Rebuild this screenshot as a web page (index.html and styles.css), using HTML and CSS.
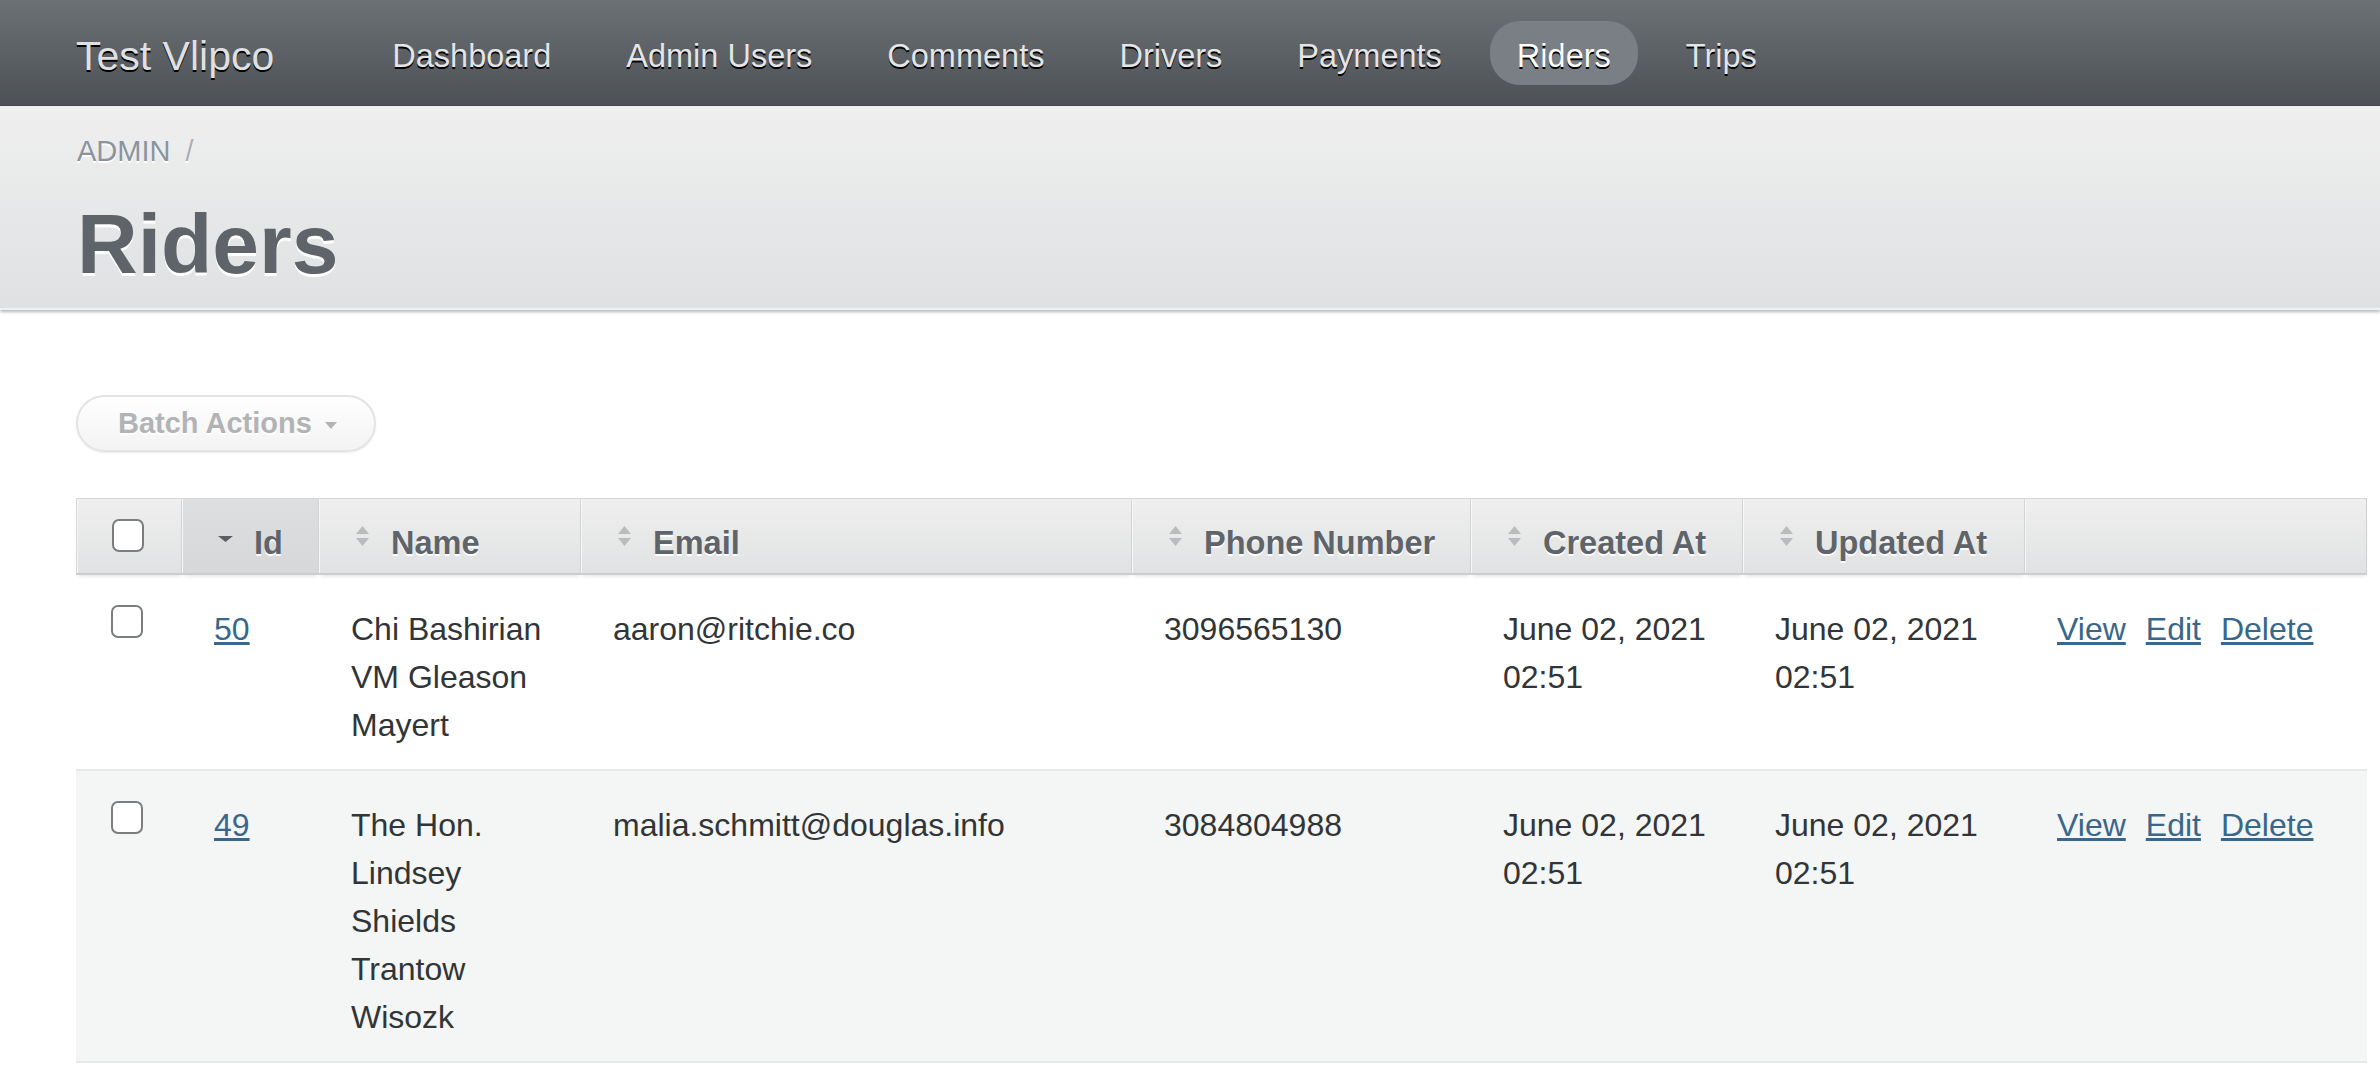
FILE: index.html
```html
<!DOCTYPE html>
<html lang="en">
<head>
<meta charset="utf-8">
<title>Riders | Test Vlipco</title>
<link rel="stylesheet" href="styles.css">
</head>
<body>
<div class="header">
  <h1 class="site-title">Test Vlipco</h1>
  <ul class="nav">
    <li class="nav-item"><a class="nav-link" href="#">Dashboard</a></li>
    <li class="nav-item"><a class="nav-link" href="#">Admin Users</a></li>
    <li class="nav-item"><a class="nav-link" href="#">Comments</a></li>
    <li class="nav-item"><a class="nav-link" href="#">Drivers</a></li>
    <li class="nav-item"><a class="nav-link" href="#">Payments</a></li>
    <li class="nav-item"><a class="nav-link current" href="#">Riders</a></li>
    <li class="nav-item"><a class="nav-link" href="#">Trips</a></li>
  </ul>
</div>

<div class="title-bar">
  <div class="breadcrumbs"><a class="crumb" href="#">ADMIN</a><span class="crumb-sep">/</span></div>
  <h2 class="page-title">Riders</h2>
</div>

<div class="main">
  <div class="table-tools">
    <a class="batch-btn" href="#">Batch Actions<span class="caret"></span></a>
  </div>

  <table class="index-table">
    <colgroup>
      <col class="c-check">
      <col class="c-id">
      <col class="c-name">
      <col class="c-email">
      <col class="c-phone">
      <col class="c-created">
      <col class="c-updated">
      <col class="c-actions">
    </colgroup>
    <thead>
      <tr>
        <th class="th-check"><input class="cb" type="checkbox"></th>
        <th class="sortable sorted"><svg class="sort-icon" width="17" height="22" viewBox="0 0 17 22"><polygon points="1,11 16,11 8.5,17" fill="#5b5f63"/></svg>Id</th>
        <th class="sortable"><svg class="sort-icon" width="17" height="22" viewBox="0 0 17 22"><polygon points="2,9 15,9 8.5,1" fill="#b9bbbd"/><polygon points="2,13 15,13 8.5,21" fill="#b9bbbd"/></svg>Name</th>
        <th class="sortable"><svg class="sort-icon" width="17" height="22" viewBox="0 0 17 22"><polygon points="2,9 15,9 8.5,1" fill="#b9bbbd"/><polygon points="2,13 15,13 8.5,21" fill="#b9bbbd"/></svg>Email</th>
        <th class="sortable"><svg class="sort-icon" width="17" height="22" viewBox="0 0 17 22"><polygon points="2,9 15,9 8.5,1" fill="#b9bbbd"/><polygon points="2,13 15,13 8.5,21" fill="#b9bbbd"/></svg>Phone Number</th>
        <th class="sortable"><svg class="sort-icon" width="17" height="22" viewBox="0 0 17 22"><polygon points="2,9 15,9 8.5,1" fill="#b9bbbd"/><polygon points="2,13 15,13 8.5,21" fill="#b9bbbd"/></svg>Created At</th>
        <th class="sortable"><svg class="sort-icon" width="17" height="22" viewBox="0 0 17 22"><polygon points="2,9 15,9 8.5,1" fill="#b9bbbd"/><polygon points="2,13 15,13 8.5,21" fill="#b9bbbd"/></svg>Updated At</th>
        <th class="th-actions"></th>
      </tr>
    </thead>
    <tbody>
      <tr class="row odd">
        <td class="td-check"><input class="cb" type="checkbox"></td>
        <td><a class="link" href="#">50</a></td>
        <td>Chi Bashirian VM Gleason Mayert</td>
        <td>aaron@ritchie.co</td>
        <td>3096565130</td>
        <td>June 02, 2021 02:51</td>
        <td>June 02, 2021 02:51</td>
        <td class="td-actions"><a class="link action" href="#">View</a><a class="link action" href="#">Edit</a><a class="link action" href="#">Delete</a></td>
      </tr>
      <tr class="row even">
        <td class="td-check"><input class="cb" type="checkbox"></td>
        <td><a class="link" href="#">49</a></td>
        <td>The Hon. Lindsey Shields Trantow Wisozk</td>
        <td>malia.schmitt@douglas.info</td>
        <td>3084804988</td>
        <td>June 02, 2021 02:51</td>
        <td>June 02, 2021 02:51</td>
        <td class="td-actions"><a class="link action" href="#">View</a><a class="link action" href="#">Edit</a><a class="link action" href="#">Delete</a></td>
      </tr>
    </tbody>
  </table>
</div>
</body>
</html>
```

FILE: styles.css
```css
html, body {
  margin: 0;
  padding: 0;
  background: #fff;
}

body {
  font-family: "Liberation Sans", Arial, Helvetica, sans-serif;
  color: #323537;
  width: 2380px;
  overflow: hidden;
}

/* ---------- Header ---------- */
.header {
  display: flex;
  align-items: center;
  height: 106px;
  box-sizing: border-box;
  padding: 0 0 0 76px;
  background: linear-gradient(#6c7176, #4d5155);
  border-bottom: 1px solid #43474b;
}

.site-title {
  margin: 0 91px 0 0;
  padding-top: 9px;
  font-size: 41px;
  font-weight: normal;
  line-height: 1.2;
  color: #dfe0e1;
  text-shadow: 0 2px 0 #000;
  white-space: nowrap;
}

.nav {
  display: flex;
  align-items: center;
  list-style: none;
  margin: 0;
  padding: 0;
}

.nav-item {
  margin-right: 21px;
}

.nav-link {
  display: block;
  height: 64px;
  box-sizing: border-box;
  padding: 7px 27px 0 27px;
  line-height: 57px;
  font-size: 32.5px;
  color: #e4e5e6;
  text-decoration: none;
  text-shadow: 0 2px 0 #000;
  border-radius: 30px;
  white-space: nowrap;
}

.nav-link.current {
  background: #7a7f85;
  color: #fff;
}

/* ---------- Title bar ---------- */
.title-bar {
  padding: 25px 76px 22px 77px;
  background: linear-gradient(#efefef, #dfe1e2);
  border-bottom: 2px solid #f1f1f1;
  box-shadow: 0 2px 3px rgba(0, 0, 0, 0.28);
  position: relative;
}

.breadcrumbs {
  height: 40px;
  line-height: 40px;
  font-size: 29px;
}

.crumb {
  color: #8a949e;
  text-decoration: none;
  text-shadow: 0 2px 0 #fff;
}

.crumb-sep {
  color: #a9afb4;
  margin-left: 15px;
  text-shadow: 0 2px 0 #fff;
}

.page-title {
  margin: 31px 0 0 0;
  font-size: 84px;
  line-height: 84px;
  font-weight: bold;
  color: #5e6469;
  text-shadow: 0 3px 0 #fff;
}

/* ---------- Main ---------- */
.main {
  padding: 85px 0 0 76px;
}

.table-tools {
  height: 57px;
  margin-bottom: 46px;
}

.batch-btn {
  display: inline-flex;
  align-items: center;
  height: 57px;
  box-sizing: border-box;
  padding: 0 37px 0 40px;
  border: 2px solid #e4e4e4;
  border-radius: 29px;
  background: linear-gradient(#ffffff, #f3f3f3);
  box-shadow: 0 1px 2px rgba(0, 0, 0, 0.08);
  font-size: 29px;
  font-weight: bold;
  color: #b1b3b5;
  text-decoration: none;
  text-shadow: 0 2px 0 #fff;
}

.caret {
  display: inline-block;
  width: 0;
  height: 0;
  margin-left: 13px;
  margin-top: 4px;
  border-left: 6.5px solid transparent;
  border-right: 6.5px solid transparent;
  border-top: 7px solid #b1b3b5;
}

/* ---------- Table ---------- */
.index-table {
  table-layout: fixed;
  width: 2291px;
  border-collapse: separate;
  border-spacing: 0;
}

.c-check { width: 106px; }
.c-id { width: 137px; }
.c-name { width: 262px; }
.c-email { width: 551px; }
.c-phone { width: 339px; }
.c-created { width: 272px; }
.c-updated { width: 282px; }
.c-actions { width: 342px; }

.index-table th {
  height: 77px;
  box-sizing: border-box;
  padding: 20px 12px 6px 35px;
  text-align: left;
  vertical-align: top;
  font-size: 32.5px;
  line-height: 48px;
  font-weight: bold;
  color: #5e6469;
  text-shadow: 0 2px 0 #fff;
  white-space: nowrap;
  background: linear-gradient(#efefef, #e1e2e3);
  border-top: 1px solid #d6d6d6;
  border-bottom: 2px solid #cdcdcd;
  border-right: 1px solid #d5d6d7;
  box-shadow: inset 1px 0 0 #f7f7f7, 0 3px 4px -2px rgba(0, 0, 0, 0.12);
}

.index-table th:first-child {
  border-left: 1px solid #d6d6d6;
}

.index-table th:last-child {
  border-right: 1px solid #cfcfcf;
}

.index-table th.sorted {
  background: linear-gradient(#dddedf, #d6d8da);
}

.sort-icon {
  vertical-align: 7px;
  margin-right: 20px;
}

.th-check {
  padding-left: 36px;
}

.cb {
  -webkit-appearance: none;
  appearance: none;
  display: inline-block;
  width: 32px;
  height: 33px;
  margin: 0;
  box-sizing: border-box;
  border: 2px solid #7b7e81;
  border-radius: 7px;
  background: #fff;
  vertical-align: top;
}

.index-table td {
  padding: 30px 32px 20px 32px;
  vertical-align: top;
  font-size: 32px;
  line-height: 48px;
  color: #323537;
  border-bottom: 2px solid #e8e9e9;
}

.index-table td.td-check {
  padding-left: 35px;
}

.row.even td {
  background: #f4f5f5;
}

.td-actions {
  white-space: nowrap;
}

.link {
  color: #38678b;
  text-decoration: underline;
}

.action {
  margin-right: 20px;
}
```
